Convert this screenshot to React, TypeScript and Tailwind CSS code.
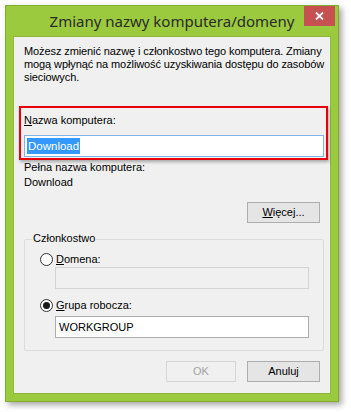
import React from "react";

const ui = { fontFamily: '"Liberation Sans", Arial, sans-serif' };

function Radio({ checked }: { checked: boolean }) {
  return (
    <div className="w-[13px] h-[13px] rounded-full border border-[#333] bg-white flex items-center justify-center shrink-0">
      {checked && <div className="w-[7px] h-[7px] rounded-full bg-[#1a1a1a]" />}
    </div>
  );
}

export default function App() {
  return (
    <div className="w-[351px] h-[412px] bg-white overflow-hidden" style={ui}>
      <div className="ml-[5px] mt-[5px] w-[334px] h-[397px] bg-[#9bca3e] border border-[#7fae2c] shadow-[3px_3px_6px_rgba(0,0,0,0.35)] flex flex-col">
        {/* Title bar */}
        <div className="relative h-[30px] flex items-center justify-center shrink-0">
          <span
            className="text-[15px] text-[#2a2a2a] mt-[1px]"
            style={{ fontFamily: '"Noto Sans", "Open Sans", sans-serif' }}
          >
            Zmiany nazwy komputera/domeny
          </span>
          <div className="absolute right-[3px] top-0 w-[31px] h-[20px] bg-[#c75050] flex items-center justify-center">
            <svg width="9" height="8" viewBox="0 0 9 8">
              <path d="M1 0.5 L8 7.5 M8 0.5 L1 7.5" stroke="white" strokeWidth="1.8" />
            </svg>
          </div>
        </div>
        {/* Client */}
        <div className="mx-[7px] mb-[7px] flex-1 bg-[#f0f0f0] border border-[#8db83a] flex flex-col text-[11px] text-black leading-[13px]">
          <p className="ml-[10px] mr-0 mt-[8px] leading-[13px] tracking-[-0.1px]">
            Możesz zmienić nazwę i członkostwo tego komputera. Zmiany mogą wpłynąć na możliwość uzyskiwania dostępu do zasobów sieciowych.
          </p>
          {/* Red highlight box */}
          <div className="ml-[5px] mt-[22px] w-[309px] h-[54px] border-2 border-[#e8000b] shadow-[1px_2px_3px_rgba(0,0,0,0.3)] pl-[3px] pt-[6px]">
            <div className="h-[14px]">
              <span className="underline">N</span>azwa komputera:
            </div>
            <div className="mt-[7px] w-[300px] h-[22px] bg-white border border-[#7eb4ea] flex items-center pl-[2px]">
              <span className="bg-[#3399ff] text-white text-[11.5px] leading-[16px] px-[1px]">Download</span>
            </div>
          </div>
          <div className="ml-[10px] mt-[1px]">Pełna nazwa komputera:</div>
          <div className="ml-[10px] mt-[2px]">Download</div>
          <div className="flex justify-end mr-[10px] mt-[13px]">
            <div className="w-[73px] h-[21px] border border-[#adadad] bg-[#e5e5e5] flex items-center justify-center">
              <span><span className="underline">W</span>ięcej...</span>
            </div>
          </div>
          {/* Group box */}
          <div className="relative ml-[10px] mt-[16px] w-[300px] h-[112px] border border-[#dcdcdc] rounded-[2px]">
            <span className="absolute left-[7px] -top-[8px] bg-[#f0f0f0] px-[1px]">Członkostwo</span>
            <div className="flex items-center gap-[3px] ml-[15px] mt-[13px]">
              <Radio checked={false} />
              <span><span className="underline">D</span>omena:</span>
            </div>
            <div className="ml-[30px] mt-[1px] w-[254px] h-[22px] border border-[#d4d4d4] bg-[#f0f0f0]" />
            <div className="flex items-center gap-[3px] ml-[15px] mt-[10px]">
              <Radio checked={true} />
              <span><span className="underline">G</span>rupa robocza:</span>
            </div>
            <div className="ml-[30px] mt-[4px] w-[254px] h-[22px] border border-[#adadad] bg-white flex items-center pl-[3px] text-[11px]">
              WORKGROUP
            </div>
          </div>
          <div className="flex justify-end gap-[11px] mr-[10px] mt-[10px]">
            <div className="w-[70px] h-[21px] border border-[#d6d6d6] bg-[#f0f0f0] flex items-center justify-center text-[#a3a3a3]">
              OK
            </div>
            <div className="w-[73px] h-[21px] border border-[#adadad] bg-[#e5e5e5] flex items-center justify-center">
              Anuluj
            </div>
          </div>
        </div>
      </div>
    </div>
  );
}
